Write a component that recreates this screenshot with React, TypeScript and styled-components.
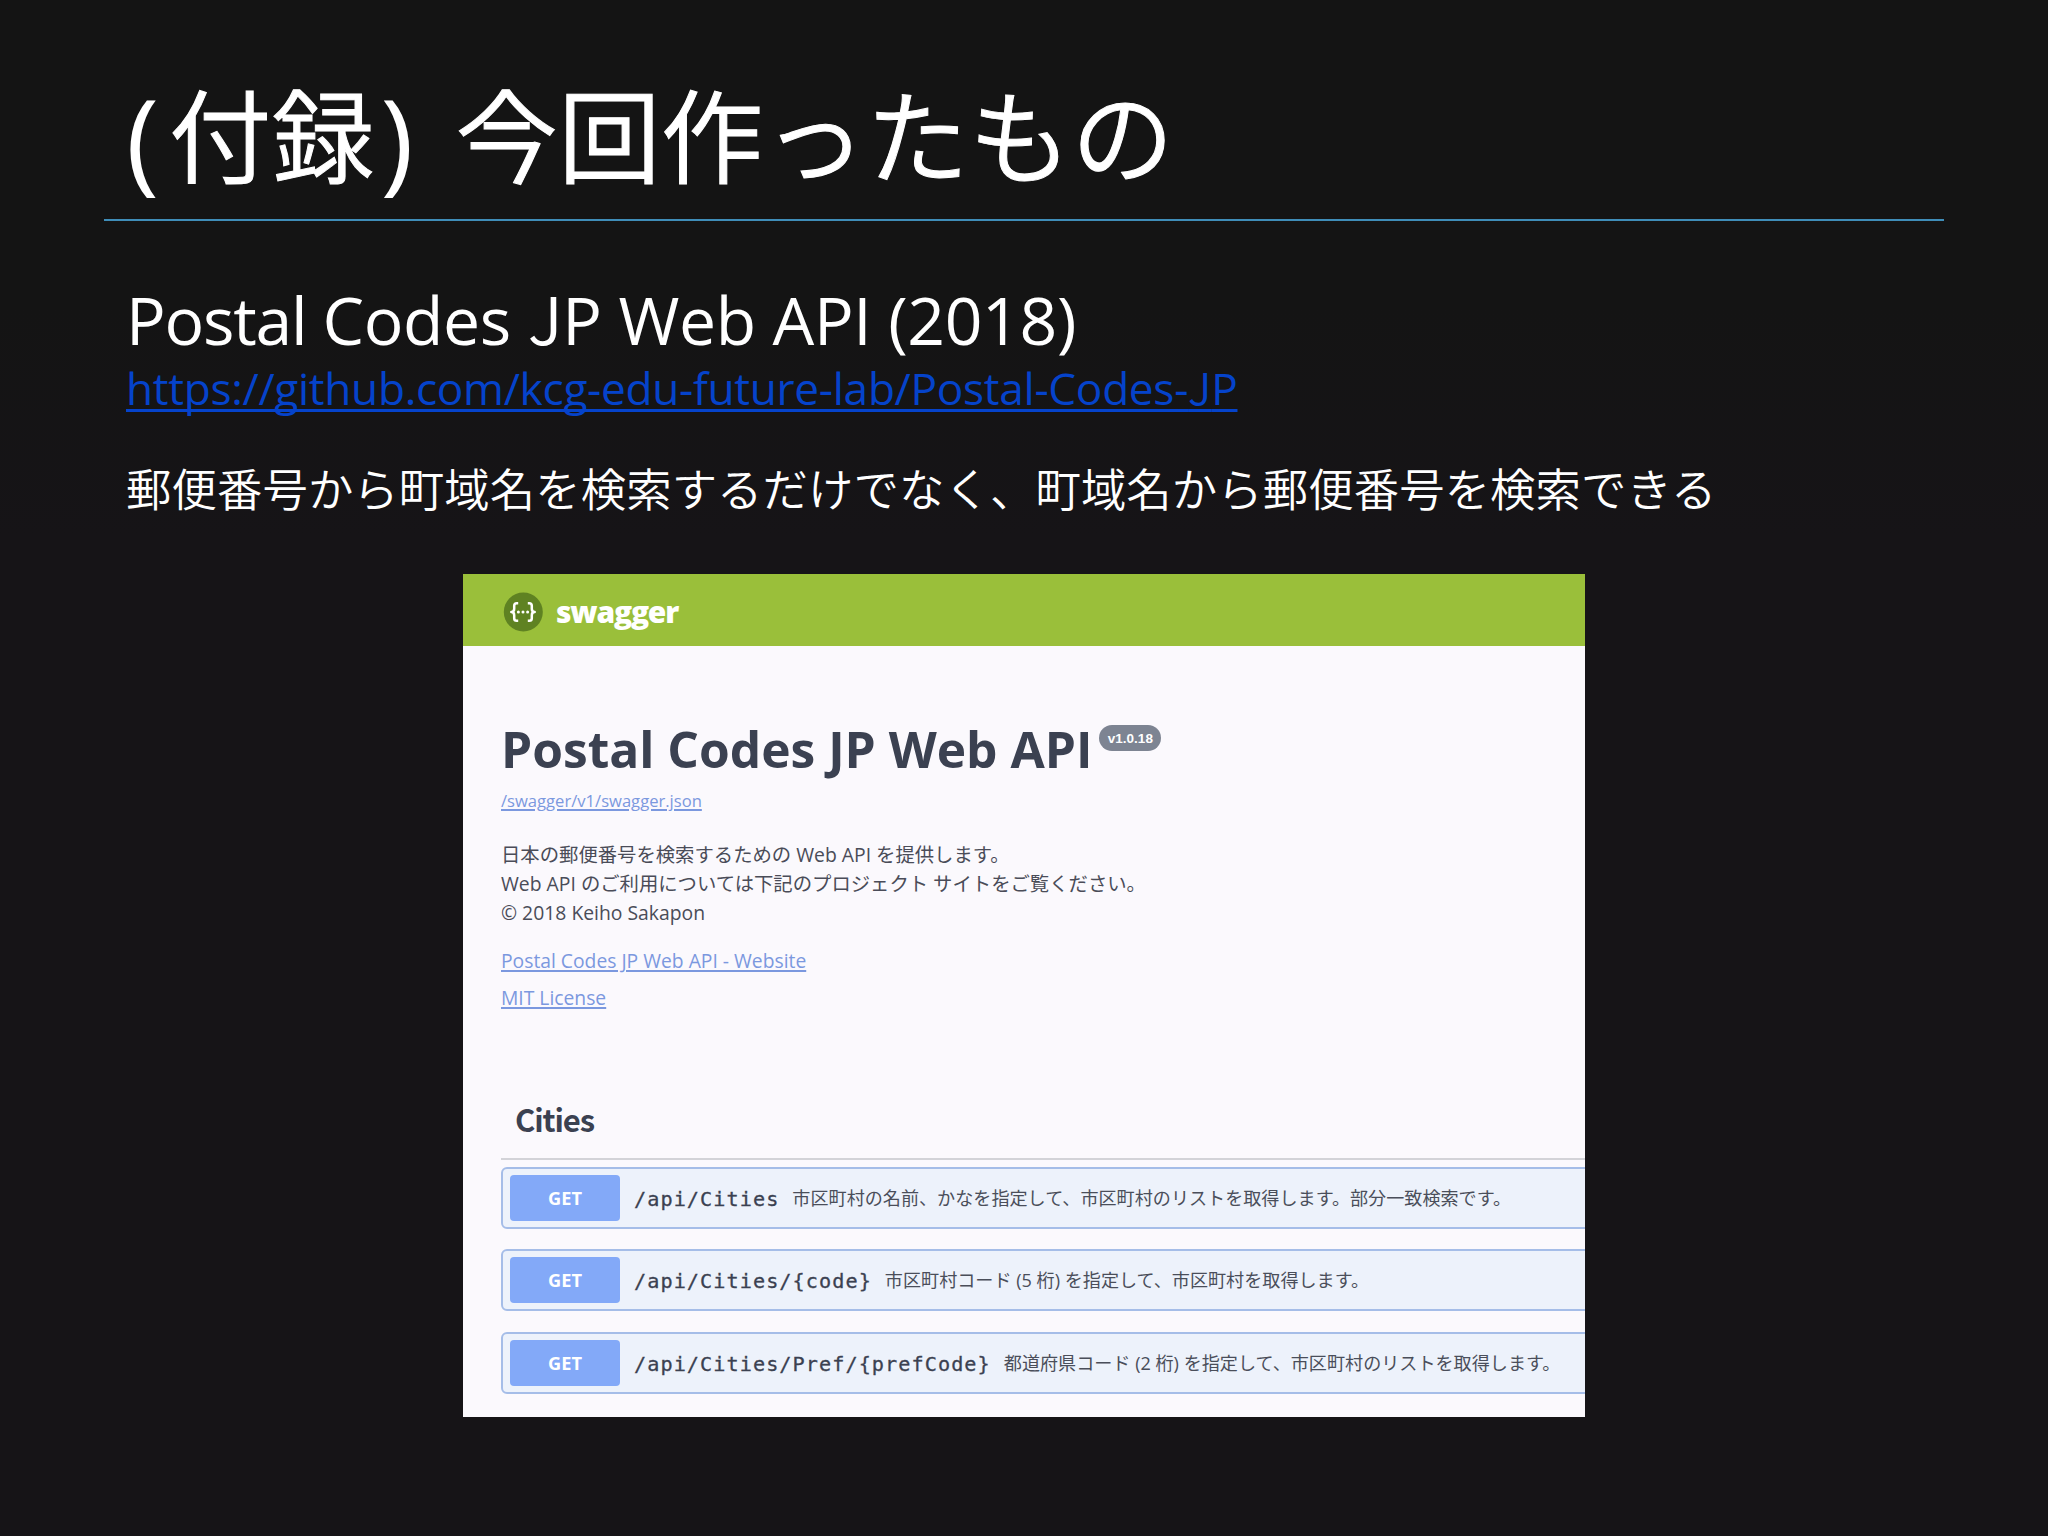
import React from "react";
import styled, { createGlobalStyle } from "styled-components";

const latin = `"Open Sans", "Noto Sans CJK JP", sans-serif`;
const japanese = `"Noto Sans CJK JP", sans-serif`;

const GlobalStyle = createGlobalStyle`
  * { box-sizing: border-box; }
  body { margin: 0; background: #151415; }
`;

const Slide = styled.main`
  width: 2048px;
  height: 1536px;
  overflow: hidden;
  display: flex;
  flex-direction: column;
  background: linear-gradient(#141414 20%, #161417 35%);
  color: #fff;
  font-family: ${latin};
`;

const SlideHeader = styled.header`
  margin: 0 104px;
  height: 221px;
  padding: 71px 0 0 22px;
  border-bottom: 2px solid #3f8db8;
`;

const SlideTitle = styled.h1`
  margin: 0;
  font: 350 102.4px/120px ${japanese};
  letter-spacing: 0.3px;
  -webkit-text-stroke: 1px #fff;
  white-space: nowrap;
`;

const Paren = styled.span<{ $before: number; $after: number }>`
  margin: 0 ${(p) => p.$after}px 0 ${(p) => p.$before}px;
  font: 400 112px/0 ${latin};
  letter-spacing: 0;
  vertical-align: -4px;
  -webkit-text-stroke: 0;
`;

const Intro = styled.section`
  display: flex;
  flex-direction: column;
  align-items: flex-start;
  padding: 58px 0 0 126px;
  white-space: nowrap;
`;

const ProjectName = styled.h2`
  margin: 0;
  font-weight: 400;
  font-size: 66px;
  line-height: 80px;
  letter-spacing: -0.35px;
`;

const Tight = styled.span`
  letter-spacing: -1.2px;
`;

const BaselineJ = styled.span`
  font-family: ${japanese};
  font-weight: 350;
  line-height: 0;
`;

const ProjectLink = styled.a`
  margin-top: 4px;
  font-size: 44.2px;
  line-height: 50px;
  letter-spacing: -0.3px;
  color: #0543cb;
  text-decoration: underline;
  text-decoration-thickness: 2.5px;
  text-underline-offset: 4px;
  text-decoration-skip-ink: none;
`;

const Summary = styled.p`
  margin: 44px 0 0;
  font: 350 45.4px/60px ${japanese};
  letter-spacing: 0.08px;
`;

const Screenshot = styled.section`
  width: 1122px;
  height: 843px;
  margin: 57px 0 0 463px;
  overflow: hidden;
  background: #fbf9fd;
  color: #3b4151;
  white-space: nowrap;
`;

const TopBar = styled.div`
  display: flex;
  align-items: center;
  gap: 13px;
  height: 72px;
  padding: 3px 0 0 40px;
  background: #9abf3a;
`;

const Brand = styled.span`
  color: #fff;
  font-weight: 800;
  font-size: 30px;
  line-height: 40px;
  letter-spacing: -1.2px;
`;

const Content = styled.div`
  display: flex;
  flex-direction: column;
  align-items: flex-start;
  padding: 73px 0 0 38px;
`;

const TitleRow = styled.div`
  display: flex;
  align-items: flex-start;
  gap: 7px;
`;

const ApiTitle = styled.h2`
  margin: 0;
  font-weight: 700;
  font-size: 49.7px;
  line-height: 60px;
`;

const Version = styled.span`
  margin-top: 6px;
  width: 62px;
  height: 26px;
  border-radius: 13px;
  background: #7d8492;
  color: #fff;
  font: 700 13.5px/27px "Liberation Sans", Arial, sans-serif;
  text-align: center;
`;

const DocLink = styled.a<{ $size: number; $line: number; $gap: number }>`
  margin-top: ${(p) => p.$gap}px;
  font-size: ${(p) => p.$size}px;
  line-height: ${(p) => p.$line}px;
  color: #7b98df;
  text-decoration: underline;
  text-decoration-thickness: 1.5px;
  text-underline-offset: 2px;
`;

const Description = styled.p`
  margin: 27px 0 0;
  font-weight: 370;
  font-size: 19.35px;
  line-height: 29px;
  color: #4a4c58;
`;

const TagHeading = styled.h3`
  align-self: stretch;
  margin: 87px 0 7px;
  padding: 0 0 19px 14px;
  border-bottom: 2px solid #d3d3d8;
  font: 700 31px/40px ${japanese};
  letter-spacing: -1.1px;
`;

const Operations = styled.div`
  align-self: stretch;
  display: flex;
  flex-direction: column;
  gap: 20.7px;
`;

const Operation = styled.div`
  display: flex;
  align-items: center;
  height: 62px;
  margin-right: -12px;
  padding-left: 7px;
  border: 2px solid #a5bde8;
  border-radius: 6px;
  background: #edf2fb;
`;

const Method = styled.span`
  width: 110px;
  height: 46px;
  border-radius: 4px;
  background: #83a9f8;
  color: #fff;
  font-weight: 700;
  font-size: 18.2px;
  line-height: 47px;
  text-align: center;
`;

const Path = styled.code`
  margin-left: 14px;
  padding-top: 2px;
  font: 400 20.2px/30px "DejaVu Sans Mono", monospace;
  letter-spacing: 1.06px;
  -webkit-text-stroke: 0.3px #3b4151;
`;

const Note = styled.span`
  margin-left: 13px;
  font-weight: 370;
  font-size: 18.1px;
  line-height: 30px;
  color: #4a4e5a;
`;

const operations = [
  { path: "/api/Cities", note: "市区町村の名前、かなを指定して、市区町村のリストを取得します。部分一致検索です。" },
  { path: "/api/Cities/{code}", note: "市区町村コード (5 桁) を指定して、市区町村を取得します。" },
  { path: "/api/Cities/Pref/{prefCode}", note: "都道府県コード (2 桁) を指定して、市区町村のリストを取得します。" },
];

function SwaggerMark() {
  return (
    <svg width="40" height="40" viewBox="0 0 40 40" fill="none">
      <circle cx="20.3" cy="20" r="19.5" fill="#5f8222" />
      <g stroke="#fff" strokeWidth="2.5" strokeLinejoin="round">
        <path d="M15.2 11.2h-1.4c-1.8 0-2.6.9-2.6 2.6v3c0 1.9-.8 3.2-2.9 3.2 2.1 0 2.9 1.3 2.9 3.2v3c0 1.7.8 2.6 2.6 2.6h1.4" />
        <path d="M24.8 11.2h1.4c1.8 0 2.6.9 2.6 2.6v3c0 1.9.8 3.2 2.9 3.2-2.1 0-2.9 1.3-2.9 3.2v3c0 1.7-.8 2.6-2.6 2.6h-1.4" />
      </g>
      <g fill="#fff">
        <circle cx="15.4" cy="20" r="1.5" />
        <circle cx="20" cy="20" r="1.5" />
        <circle cx="24.6" cy="20" r="1.5" />
      </g>
    </svg>
  );
}

export default function App() {
  return (
    <>
      <GlobalStyle />
      <Slide>
        <SlideHeader>
          <SlideTitle>
            <Paren $before={0} $after={10}>(</Paren>付録<Paren $before={6} $after={42}>)</Paren>今回作ったもの
          </SlideTitle>
        </SlideHeader>
        <Intro>
          <ProjectName>
            <Tight>Postal </Tight>Codes <BaselineJ>J</BaselineJ>P Web API (2018)
          </ProjectName>
          <ProjectLink>
            https://github.com/kcg-edu-future-lab/Postal-Codes-<BaselineJ>J</BaselineJ>P
          </ProjectLink>
          <Summary>郵便番号から町域名を検索するだけでなく、町域名から郵便番号を検索できる</Summary>
        </Intro>
        <Screenshot>
          <TopBar>
            <SwaggerMark />
            <Brand>swagger</Brand>
          </TopBar>
          <Content>
            <TitleRow>
              <ApiTitle>Postal Codes JP Web API</ApiTitle>
              <Version>v1.0.18</Version>
            </TitleRow>
            <DocLink $size={16.6} $line={24} $gap={9.5}>/swagger/v1/swagger.json</DocLink>
            <Description>
              日本の郵便番号を検索するための Web API を提供します。<br />
              Web API のご利用については下記のプロジェクト サイトをご覧ください。<br />
              © 2018 Keiho Sakapon
            </Description>
            <DocLink $size={19.3} $line={28} $gap={20}>Postal Codes JP Web API - Website</DocLink>
            <DocLink $size={19.3} $line={28} $gap={9}>MIT License</DocLink>
            <TagHeading>Cities</TagHeading>
            <Operations>
              {operations.map((op) => (
                <Operation key={op.path}>
                  <Method>GET</Method>
                  <Path>{op.path}</Path>
                  <Note>{op.note}</Note>
                </Operation>
              ))}
            </Operations>
          </Content>
        </Screenshot>
      </Slide>
    </>
  );
}
